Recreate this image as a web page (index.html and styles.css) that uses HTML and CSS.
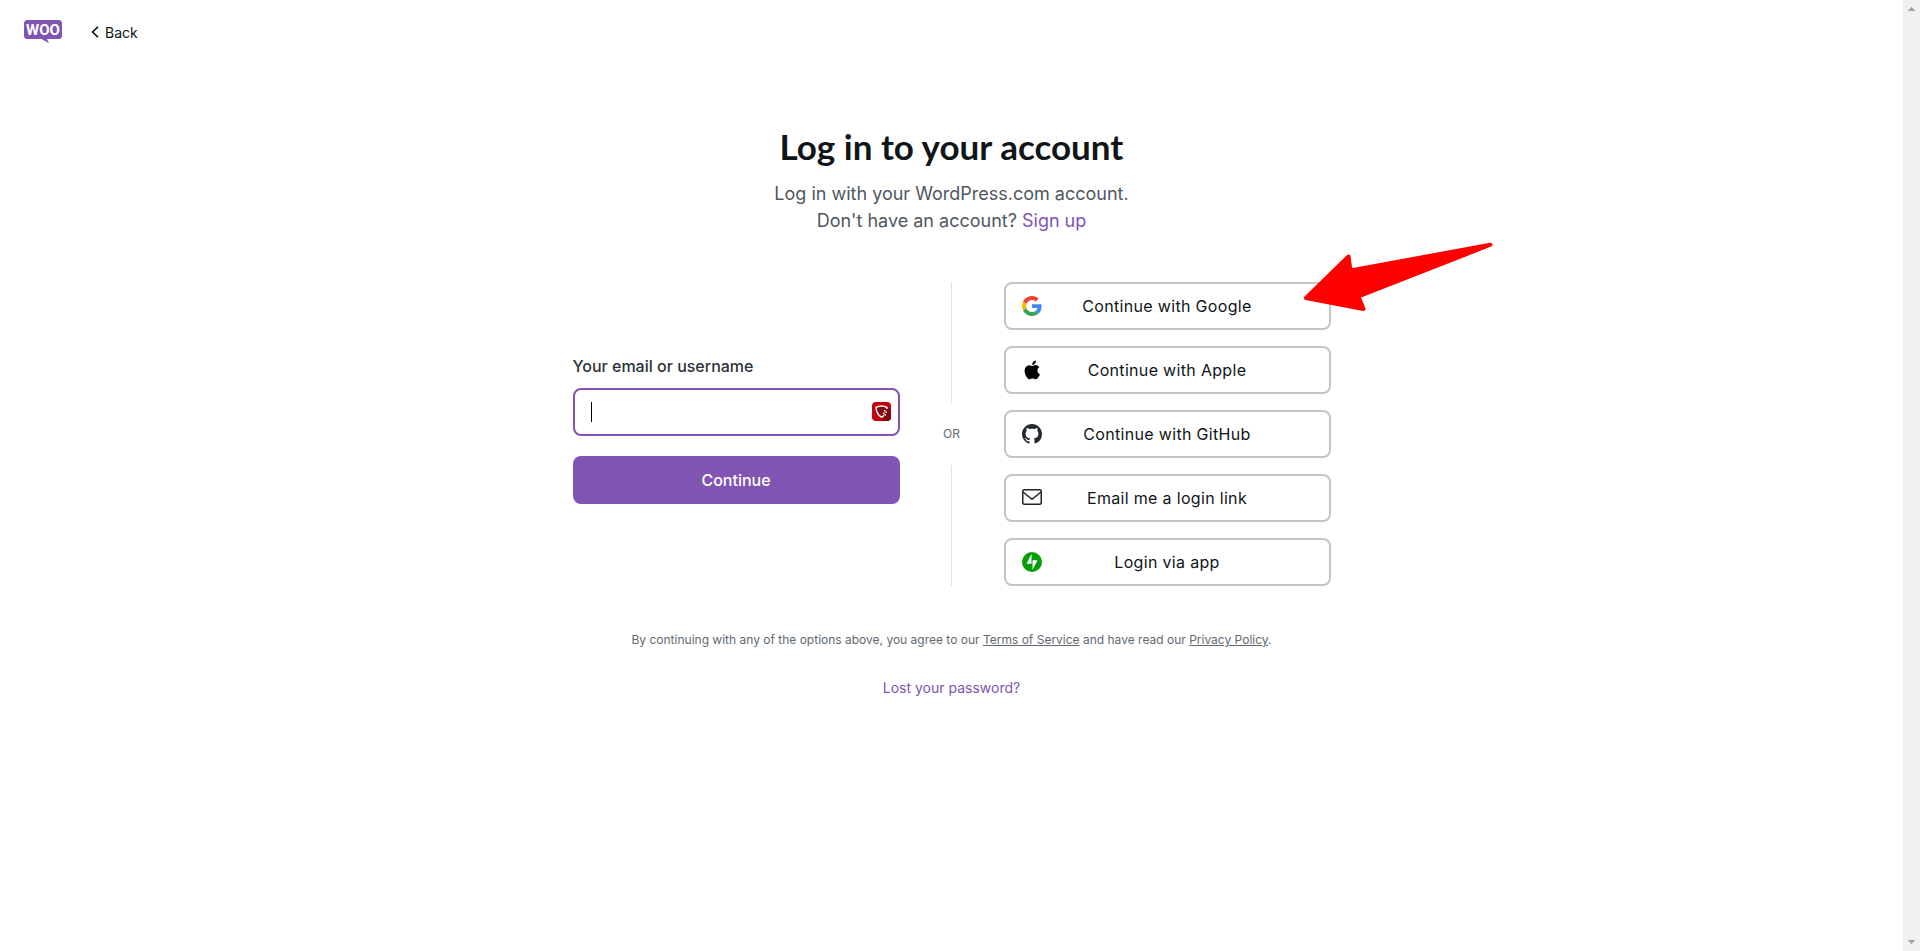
FILE: index.html
```html
<!DOCTYPE html>
<html lang="en">

<head>
  <meta charset="UTF-8">
  <meta name="viewport" content="width=device-width, initial-scale=1.0">
  <title>Log in to your account</title>
  <link rel="stylesheet" href="styles.css">
</head>

<body>
  <div class="page">
    <header class="masthead">
      <a href="#" class="logo" aria-label="Woo">
        <svg width="38" height="24" viewBox="0 0 38 24">
          <path fill="#7f54b3" d="M3.5 0h31A3.5 3.5 0 0 1 38 3.5v12a3.5 3.5 0 0 1-3.5 3.5H23l2 4.3L17.600 19H3.500A3.500 3.500 0 0 1 0 15.500v-12A3.500 3.500 0 0 1 3.500 0z" />
          <text class="logo-text" x="19" y="15" text-anchor="middle">WOO</text>
        </svg>
      </a>
      <a href="#" class="back">
        <svg width="8" height="12" viewBox="0 0 8 12" fill="none" stroke="#101517" stroke-width="1.600">
          <path d="M7 .8 1.600 6 7 11.200" />
        </svg>
        Back
      </a>
    </header>

    <main class="login">
      <h1>Log in to your account</h1>
      <p class="subtitle">Log in with your WordPress.com account.<br>Don't have an account? <a href="#">Sign up</a></p>

      <div class="columns">
        <form class="login-form">
          <label for="username">Your email or username</label>
          <div class="field">
            <input type="text" id="username">
            <span class="caret"></span>
            <svg class="manager-icon" width="19" height="19" viewBox="0 0 19 19">
              <rect width="19" height="19" rx="4" fill="#c4020c" />
              <path fill="#82060d" d="m15.500 5 3.500 3.500V15a4 4 0 0 1-4 4h-2.500L8 14.500z" />
              <path fill="#8b0910" stroke="#fff" stroke-width="1.500" stroke-linejoin="round" d="M12 13.200c-.7.900-1.600 1.600-2.500 2-3-1.600-5-4.700-5.500-9.700 3.200-1.700 7.800-1.700 11 0l-.2 1.500" />
              <path fill="#fff" d="M12 8h1.500v1.500H12zM13.500 9.500H15V11h-1.500zM11 10.500h1.500V12H11zM12.500 12H14v1.500h-1.500z" />
            </svg>
          </div>
          <button type="submit" class="primary">Continue</button>
        </form>

        <div class="divider"><span>OR</span></div>

        <div class="social">
          <button type="button">
            <svg width="20" height="20" viewBox="0 0 48 48">
              <path fill="#EA4335" d="M24 9.500c3.540 0 6.710 1.220 9.210 3.600l6.850-6.850C35.900 2.380 30.470 0 24 0 14.620 0 6.510 5.380 2.560 13.220l7.980 6.190C12.430 13.720 17.740 9.500 24 9.500z" />
              <path fill="#4285F4" d="M46.980 24.550c0-1.570-.15-3.090-.38-4.550H24v9.020h12.940c-.58 2.960-2.260 5.480-4.780 7.180l7.730 6c4.510-4.180 7.090-10.360 7.090-17.650z" />
              <path fill="#FBBC05" d="M10.530 28.590c-.48-1.450-.76-2.990-.76-4.590s.27-3.140.76-4.590l-7.980-6.190C.92 16.460 0 20.120 0 24c0 3.880.92 7.540 2.560 10.780l7.970-6.190z" />
              <path fill="#34A853" d="M24 48c6.480 0 11.930-2.130 15.890-5.810l-7.730-6c-2.150 1.450-4.920 2.300-8.160 2.300-6.260 0-11.570-4.220-13.470-9.910l-7.980 6.190C6.510 42.620 14.620 48 24 48z" />
            </svg>
            <span>Continue with Google</span>
          </button>
          <button type="button">
            <svg width="20" height="20" viewBox="0 0 20 20">
              <path fill="#000" transform="translate(.9 .6) scale(.78)" d="M12.152 6.896c-.948 0-2.415-1.078-3.960-1.040-2.040.027-3.910 1.183-4.961 3.014-2.117 3.675-.546 9.103 1.519 12.090 1.013 1.454 2.208 3.090 3.792 3.039 1.520-.065 2.090-.987 3.935-.987 1.831 0 2.350.987 3.960.948 1.637-.026 2.676-1.480 3.676-2.948 1.156-1.688 1.636-3.325 1.662-3.415-.039-.013-3.182-1.221-3.220-4.857-.026-3.040 2.480-4.494 2.597-4.559-1.429-2.090-3.623-2.324-4.390-2.376-2-.156-3.675 1.090-4.610 1.090zM15.530 3.830c.843-1.012 1.400-2.427 1.245-3.830-1.207.052-2.662.805-3.532 1.818-.78.896-1.454 2.338-1.273 3.714 1.338.104 2.715-.688 3.559-1.701" />
            </svg>
            <span>Continue with Apple</span>
          </button>
          <button type="button">
            <svg width="20" height="20" viewBox="0 0 16 16">
              <path fill="#24292f" d="M8 0C3.580 0 0 3.580 0 8c0 3.540 2.290 6.530 5.470 7.590.4.070.55-.17.55-.38 0-.19-.01-.82-.01-1.490-2.010.37-2.530-.49-2.690-.94-.09-.23-.48-.94-.82-1.130-.28-.15-.68-.52-.01-.53.63-.01 1.080.58 1.230.82.72 1.210 1.870.87 2.330.66.07-.52.28-.87.51-1.070-1.780-.2-3.640-.89-3.640-3.950 0-.87.31-1.590.82-2.150-.08-.2-.36-1.020.08-2.120 0 0 .67-.21 2.200.82.64-.18 1.320-.27 2-.27s1.360.09 2 .27c1.530-1.040 2.200-.82 2.200-.82.44 1.100.16 1.920.08 2.120.51.56.82 1.270.82 2.150 0 3.070-1.870 3.750-3.650 3.950.29.25.54.73.54 1.480 0 1.070-.01 1.930-.01 2.200 0 .21.15.46.55.38A8.010 8.010 0 0 0 16 8c0-4.420-3.580-8-8-8z" />
            </svg>
            <span>Continue with GitHub</span>
          </button>
          <button type="button">
            <svg width="20" height="20" viewBox="0 0 20 20" fill="none" stroke="#1d2327" stroke-width="1.500">
              <rect x=".75" y="1.750" width="18.500" height="14.500" rx="1.500" />
              <path d="m1 4 9 7.300L19 4" />
            </svg>
            <span>Email me a login link</span>
          </button>
          <button type="button">
            <svg width="20" height="20" viewBox="0 0 32 32">
              <path fill="#069e08" d="M16 0a16 16 0 1 0 0 32 16 16 0 0 0 0-32z" />
              <path fill="#fff" d="M15.200 18.700h-8l8-15.500zM16.800 28.800V13.300h8z" />
            </svg>
            <span>Login via app</span>
          </button>

          <svg class="arrow" width="196" height="76" viewBox="0 0 196 76">
            <path fill="#f00" stroke="#f00" stroke-width="4" stroke-linejoin="round" d="M6 58 48.500 16.500 50.500 30.500 190.500 4.700 58.500 56.500 63.500 69z" />
          </svg>
        </div>
      </div>

      <p class="terms">By continuing with any of the options above, you agree to our <a href="#">Terms of Service</a> and have read our <a href="#">Privacy Policy</a>.</p>
      <a href="#" class="lost">Lost your password?</a>
    </main>
  </div>

  <div class="scrollbar">
    <svg width="7" height="4" viewBox="0 0 7 4"><path fill="#a3a3a3" d="M3 0h1v1h1v1h1v1h1v1H0V3h1V2h1V1h1z" /></svg>
    <svg width="7" height="4" viewBox="0 0 7 4"><path fill="#a3a3a3" d="M0 0h7v1H6v1H5v1H4v1H3V3H2V2H1V1H0z" /></svg>
  </div>
</body>

</html>
```
FILE: styles.css
```css
* {
  box-sizing: border-box;
}

body {
  margin: 0;
  display: flex;
  min-height: 100vh;
  background: #fff;
  color: #101517;
  font-family: Inter, "Liberation Sans", sans-serif;
}

a {
  color: #7f54b3;
  text-decoration: none;
}

button,
input {
  font-family: inherit;
  font-size: 16px;
}

.page {
  flex: 1;
}

.masthead {
  display: flex;
  align-items: center;
  gap: 29px;
  height: 64px;
  padding: 0 24px;
}

.logo {
  display: flex;
}

.logo-text {
  fill: #fff;
  font-family: Roboto, sans-serif;
  font-size: 15px;
  font-weight: 700;
}

.back {
  display: flex;
  align-items: center;
  gap: 6px;
  color: #101517;
  font-size: 14px;
}

.login {
  display: flex;
  flex-direction: column;
  align-items: center;
  padding: 60px 24px;
}

h1 {
  margin: 0;
  font-family: Lato, sans-serif;
  font-size: 35px;
  font-weight: 700;
  line-height: 44px;
}

.subtitle {
  margin: 12px 0 48px;
  color: #50575e;
  font-size: 18px;
  line-height: 27px;
  text-align: center;
}

.columns {
  display: grid;
  grid-template-columns: 1fr 104px 1fr;
  width: 100%;
  max-width: 758px;
}

.login-form {
  display: flex;
  flex-direction: column;
  justify-content: center;
  padding-bottom: 10px;
}

.login-form label {
  margin-bottom: 10px;
  color: #2c3338;
  font-weight: 500;
  line-height: 24px;
}

.field {
  position: relative;
  margin-bottom: 20px;
}

.field input {
  display: block;
  width: 100%;
  height: 48px;
  padding: 0 48px 0 16px;
  border: 2px solid #7f54b3;
  border-radius: 8px;
  outline: 0;
  background: #fff;
}

.caret {
  position: absolute;
  top: 14px;
  left: 18px;
  width: 1px;
  height: 20px;
  background: #000;
}

.manager-icon {
  position: absolute;
  top: 14px;
  right: 9px;
}

.primary {
  height: 48px;
  border: 0;
  border-radius: 8px;
  background: #7f54b3;
  color: #fff;
  font-weight: 500;
}

.divider {
  display: flex;
  flex-direction: column;
  align-items: center;
  color: #646970;
  font-size: 12px;
  line-height: 62px;
}

.divider::before,
.divider::after {
  content: "";
  flex: 1;
  width: 1px;
  background: #e2e2e4;
}

.social {
  position: relative;
  display: flex;
  flex-direction: column;
  gap: 16px;
}

.social button {
  display: flex;
  align-items: center;
  height: 48px;
  padding: 0 16px;
  border: 2px solid #c3c4c7;
  border-radius: 8px;
  background: #fff;
  color: #101517;
  letter-spacing: 0.32px;
}

.social button span {
  flex: 1;
  padding-right: 20px;
}

.arrow {
  position: absolute;
  top: -42px;
  right: -165px;
}

.terms {
  margin: 44px 0 28px;
  color: #646970;
  font-size: 12px;
  line-height: 20px;
}

.terms a {
  color: inherit;
  text-decoration: underline;
}

.lost {
  font-size: 14px;
  line-height: 20px;
}

.scrollbar {
  display: flex;
  flex-direction: column;
  align-items: center;
  justify-content: space-between;
  width: 17px;
  padding: 7px 0;
  background: #f0f0f0;
}
```
